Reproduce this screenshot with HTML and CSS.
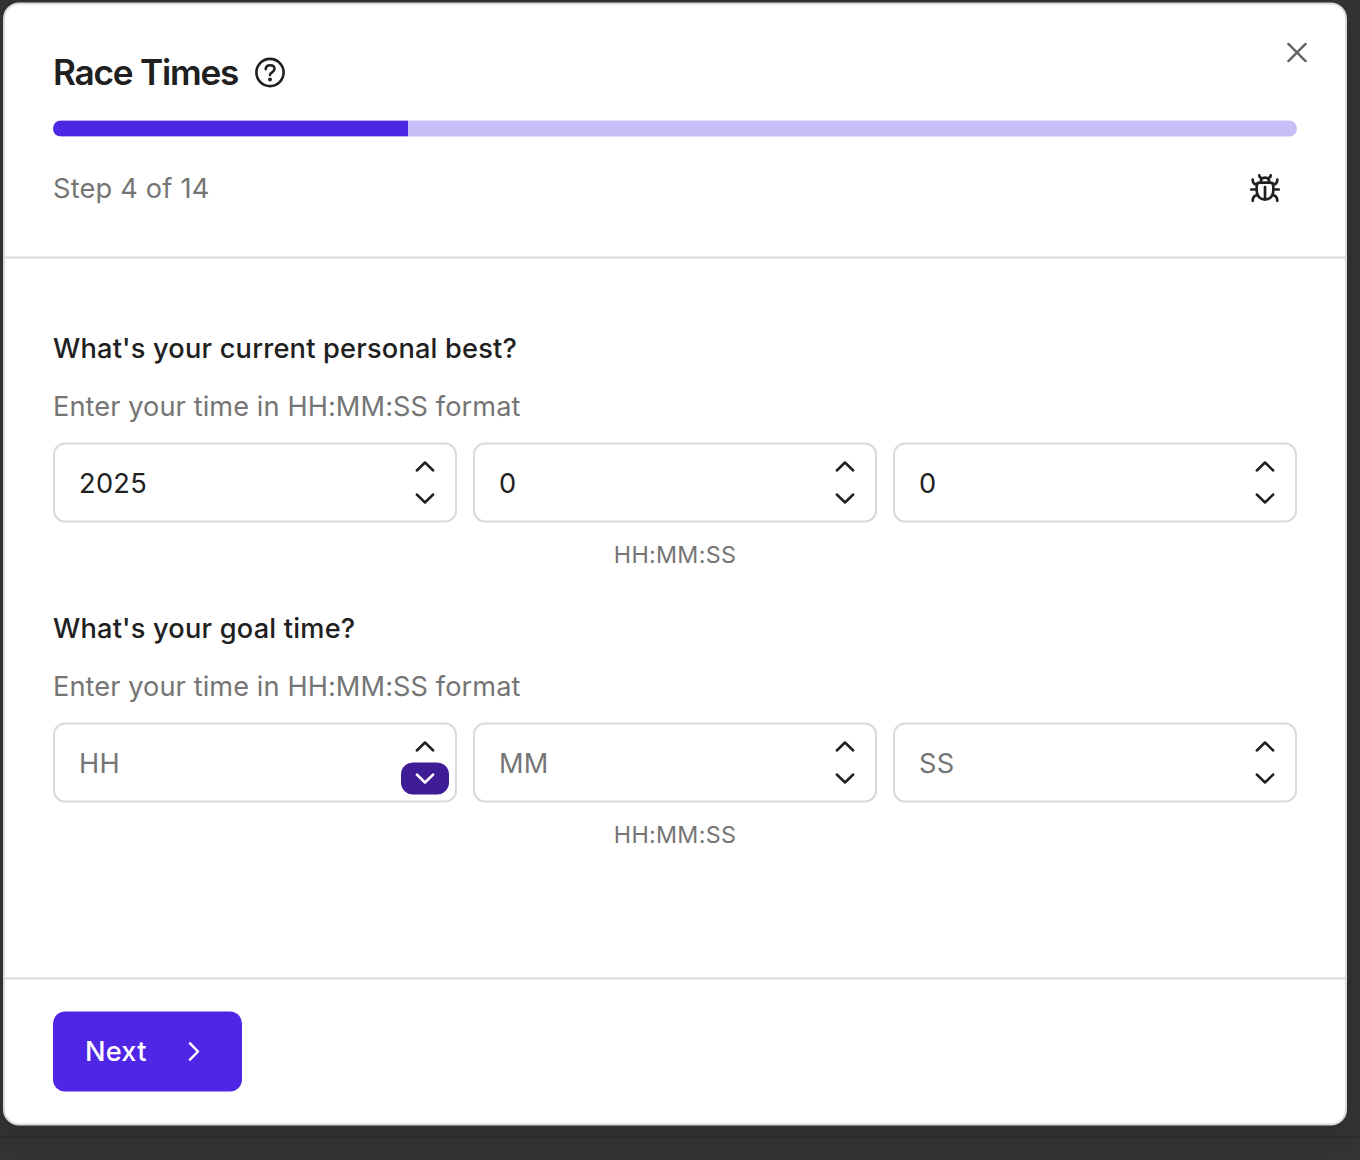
FILE: index.html
```
<!DOCTYPE html>
<html lang="en">
<head>
<meta charset="utf-8">
<title>Race Times</title>
<link rel="stylesheet" href="styles.css">
</head>
<body>
<svg class="sprite" aria-hidden="true">
  <symbol id="up" viewBox="0 0 48 32"><path d="M15.800 20 24 12l8.200 8"/></symbol>
  <symbol id="down" viewBox="0 0 48 32"><path d="M15.800 12 24 20l8.200-8"/></symbol>
</svg>
<main class="dialog" role="dialog" aria-labelledby="title">
  <button class="close" aria-label="Close"><svg viewBox="0 0 20 20"><path d="M1.400 1.400l17.200 17.200M18.600 1.400L1.400 18.600"/></svg></button>
  <header class="header">
    <div class="title-row">
      <h1 class="title" id="title">Race Times</h1>
      <svg class="help" viewBox="0 0 32 32"><circle cx="16" cy="16" r="13.600"/><path d="M11.700 12.600c.2-2.500 1.900-3.900 4.400-3.900s4.400 1.400 4.400 3.600c0 1.700-1 2.700-2.400 3.500-1.500.9-2.100 1.500-2.100 2.700"/><circle class="dot" cx="16" cy="23" r="1.900"/></svg>
    </div>
    <div class="progress"><div class="progress-fill" style="width:28.5714%"></div></div>
    <div class="step-row">
      <span class="muted step">Step 4 of 14</span>
      <svg class="bug" viewBox="0 0 32 32"><path d="M7.700 13.200c0-2 1.100-3 3-3h10.600c1.900 0 3 1 3 3v5.300c0 5-3.400 8.600-8.300 8.600s-8.300-3.600-8.300-8.600zM11.700 10c0-3.200 1.300-4.800 4.300-4.800s4.300 1.600 4.300 4.800M12.600 5.600c-1.400-.3-2.200-1.200-2.300-2.700M19.400 5.600c1.400-.3 2.200-1.200 2.300-2.700M16 14.500v12.500M7.700 17H2.200M24.300 17h5.500M8.200 12.200c-2.800-.2-4.500-1.900-4.500-5M23.800 12.200c2.800-.2 4.500-1.900 4.500-5M8.900 22.300c-3.200.3-5.200 2.300-5.200 6M23.100 22.300c3.200.3 5.200 2.300 5.200 6"/></svg>
    </div>
  </header>
  <section class="content">
    <div class="question">
      <h2 class="label">What's your current personal best?</h2>
      <p class="muted hint">Enter your time in HH:MM:SS format</p>
      <div class="fields">
        <div class="field"><span class="value">2025</span><span class="spin"><svg><use href="#up"/></svg><svg><use href="#down"/></svg></span></div>
        <div class="field"><span class="value">0</span><span class="spin"><svg><use href="#up"/></svg><svg><use href="#down"/></svg></span></div>
        <div class="field"><span class="value">0</span><span class="spin"><svg><use href="#up"/></svg><svg><use href="#down"/></svg></span></div>
      </div>
      <p class="format">HH:MM:SS</p>
    </div>
    <div class="question">
      <h2 class="label">What's your goal time?</h2>
      <p class="muted hint">Enter your time in HH:MM:SS format</p>
      <div class="fields">
        <div class="field"><span class="value muted">HH</span><span class="spin"><svg><use href="#up"/></svg><svg class="pressed"><use href="#down"/></svg></span></div>
        <div class="field"><span class="value muted">MM</span><span class="spin"><svg><use href="#up"/></svg><svg><use href="#down"/></svg></span></div>
        <div class="field"><span class="value muted">SS</span><span class="spin"><svg><use href="#up"/></svg><svg><use href="#down"/></svg></span></div>
      </div>
      <p class="format">HH:MM:SS</p>
    </div>
  </section>
  <footer class="footer">
    <button class="next">Next<svg viewBox="0 0 32 32"><path d="M12 7.800 20 16l-8 8.200"/></svg></button>
  </footer>
</main>
</body>
</html>
```
FILE: styles.css
```
* { box-sizing: border-box; }
body {
  margin: 0;
  height: 1160px;
  overflow: hidden;
  padding: 2px 0 0 3px;
  font: 400 27.2px/40px Inter, "Liberation Sans", sans-serif;
  letter-spacing: 0.2px;
  color: #202020;
  background: linear-gradient(#2c2c2c, #2c2c2c) 0 1136px / 100% 2px no-repeat, #333;
}
h1, h2, p { margin: 0; }
button { font: inherit; letter-spacing: inherit; border: 0; padding: 0; background: none; }
svg { display: block; fill: none; stroke: currentColor; stroke-width: 2.5; stroke-linecap: round; stroke-linejoin: round; }
.sprite { position: absolute; width: 0; height: 0; }
.dialog {
  position: relative;
  display: flex;
  flex-direction: column;
  width: 1344px;
  height: 1123px;
  border: 2px solid #d9d9d9;
  border-radius: 16px;
  background: #fff;
  box-shadow: 0 6px 24px rgba(0, 0, 0, .12);
  transform: translateY(.5px);
}
.close { position: absolute; top: 38px; right: 38px; color: #646464; }
.close svg { width: 20px; height: 20px; }
.header { height: 254px; padding: 48px 48px 0; border-bottom: 2px solid #d9d9d9; }
.title-row { display: flex; align-items: center; gap: 16px; height: 40px; }
.title { padding-bottom: 2px; font-size: 35.2px; font-weight: 600; line-height: 38px; letter-spacing: -1.23px; }
.help { width: 32px; height: 32px; stroke-width: 2.6; }
.dot { fill: currentColor; stroke: none; }
.progress { height: 16px; margin: 28px 0 32px; border-radius: 8px; overflow: hidden; background: #c8bef8; }
.progress-fill { height: 100%; background: #4c27e4; }
.step-row { display: flex; align-items: center; justify-content: space-between; height: 40px; padding-right: 16px; }
.bug { width: 32px; height: 32px; stroke-width: 2.7; }
.muted { color: #757575; }
.content { flex: 1; display: flex; flex-direction: column; gap: 38px; padding: 70px 48px 0; }
.label { font-size: 27.2px; font-weight: 500; line-height: 40px; }
.hint { margin: 18px 0 16px; letter-spacing: 0.08px; }
.fields { display: grid; grid-template-columns: repeat(3, 1fr); gap: 16px; }
.field {
  display: flex;
  align-items: center;
  justify-content: space-between;
  height: 80px;
  padding: 0 6px 0 24px;
  border: 2px solid #d9d9d9;
  border-radius: 12px;
}
.value { padding-top: 1px; letter-spacing: 0.3px; }
.spin svg { width: 48px; height: 32px; }
.pressed { color: #fff; background: #3e1c96; border-radius: 12px; }
.format { margin-top: 16px; font-size: 23.3px; line-height: 32px; letter-spacing: 0.3px; text-align: center; color: #757575; }
.footer { padding: 32px 48px; border-top: 2px solid #d9d9d9; }
.next {
  display: flex;
  align-items: center;
  justify-content: space-between;
  width: 189px;
  height: 80px;
  padding: 0 32px;
  border-radius: 12px;
  background: #5026e6;
  color: #fff;
  font-weight: 500;
}
.next svg { width: 32px; height: 32px; }
```
